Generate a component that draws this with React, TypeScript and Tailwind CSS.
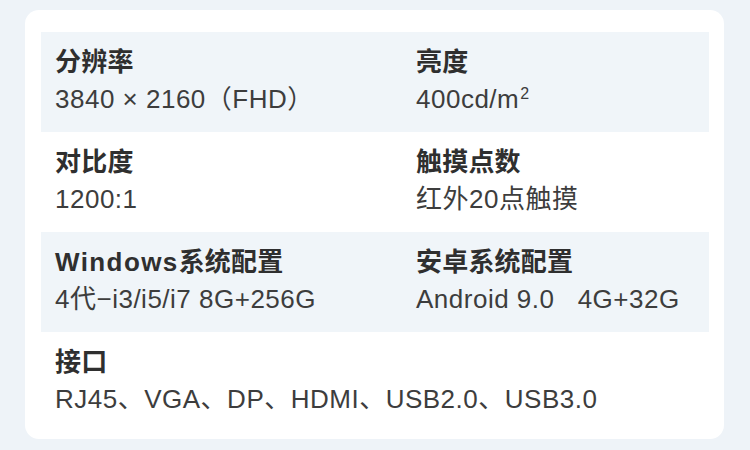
import React from "react";

type Spec = { label: React.ReactNode; value: React.ReactNode };

const rows: { shaded: boolean; items: Spec[] }[] = [
  {
    shaded: true,
    items: [
      { label: "分辨率", value: "3840 × 2160（FHD）" },
      {
        label: "亮度",
        value: (
          <>
            400cd/m<span className="inline-block align-top text-[16px] leading-[16px] mt-[7px] ml-[1px]">2</span>
          </>
        ),
      },
    ],
  },
  {
    shaded: false,
    items: [
      { label: "对比度", value: "1200:1" },
      { label: "触摸点数", value: "红外20点触摸" },
    ],
  },
  {
    shaded: true,
    items: [
      {
        label: (
          <>
            <span className="tracking-[1.4px]">Windows</span>系统配置
          </>
        ),
        value: "4代−i3/i5/i7 8G+256G",
      },
      { label: "安卓系统配置", value: "Android 9.0\u00a0\u00a0\u00a04G+32G" },
    ],
  },
  {
    shaded: false,
    items: [{ label: "接口", value: "RJ45、VGA、DP、HDMI、USB2.0、USB3.0" }],
  },
];

function Cell({ spec }: { spec: Spec }) {
  return (
    <div className="flex flex-col pt-[13px]">
      <div className="text-[26px] leading-[34px] font-bold text-[#2f2f2f] tracking-[0.2px]">{spec.label}</div>
      <div className="text-[26px] leading-[40px] text-[#3d3d3d] tracking-[0.5px] whitespace-nowrap">{spec.value}</div>
    </div>
  );
}

export default function App() {
  return (
    <div
      className="w-[750px] h-[450px] bg-[#eef3f8] pt-[10px] pl-[25px] pr-[26px]"
      style={{ fontFamily: '"Liberation Sans", "Noto Sans CJK SC", sans-serif' }}
    >
      <div className="bg-white rounded-[14px] pt-[22px] pb-[7px] pl-[16px] pr-[15px]">
        {rows.map((row, i) => (
          <div
            key={i}
            className={`grid grid-cols-[361px_1fr] h-[100px] pl-[14px] ${row.shaded ? "bg-[#f0f5f9]" : "bg-white"}`}
          >
            {row.items.length === 1 ? (
              <div className="col-span-2">
                <Cell spec={row.items[0]} />
              </div>
            ) : (
              row.items.map((s, j) => <Cell key={j} spec={s} />)
            )}
          </div>
        ))}
      </div>
    </div>
  );
}
